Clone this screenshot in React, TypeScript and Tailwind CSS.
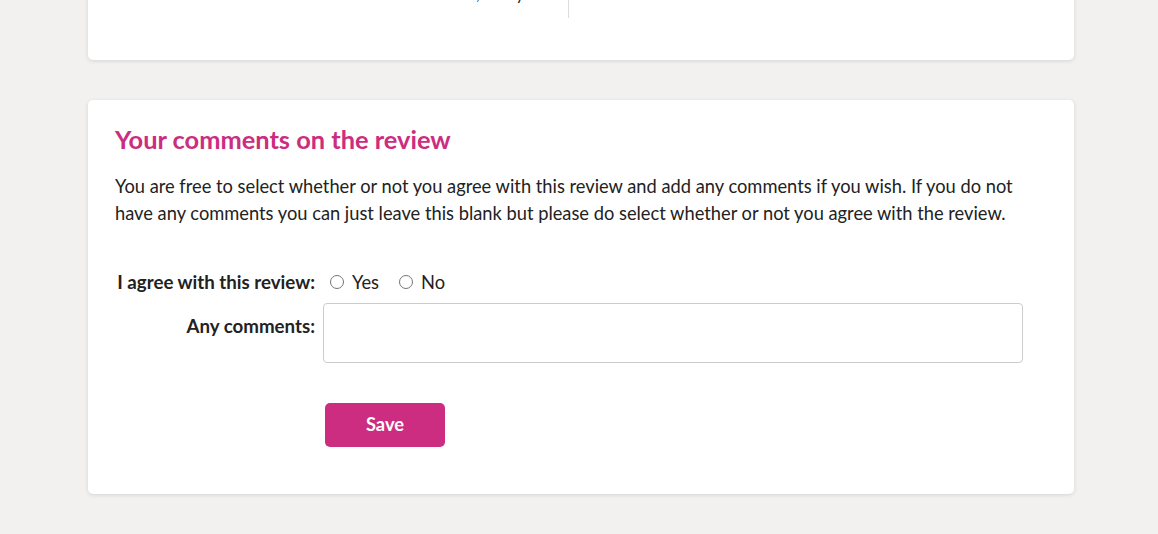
import { useState } from 'react';

export default function App() {
  const [agree, setAgree] = useState<string | null>(null);

  return (
    <div className="flex min-h-[534px] flex-col bg-[#f2f1ef] pl-[88px] pr-[84px] pb-10 font-['Lato','Open_Sans',sans-serif] text-[18.3px] text-[#222222]">
      {/* previous card, scrolled mostly off screen */}
      <div className="-mt-[20px] rounded-b-[5px] bg-white pb-[42px] shadow-[0_1px_4px_rgba(0,0,0,0.12)]">
        <div className="flex">
          <div className="w-[481px] border-r border-[#dddddd] pb-[11px] pr-[44px] text-right text-[16px] leading-[27px] text-[#222222]">
            Submitted 14 March, 1 July
          </div>
          <div className="flex-1" />
        </div>
      </div>

      <div className="mt-10 rounded-[5px] bg-white px-[27px] pb-[47px] pt-[22px] shadow-[0_1px_4px_rgba(0,0,0,0.12)]">
        <h2 className="text-[25.4px] font-bold leading-[34px] text-[#cc2d80]">
          Your comments on the review
        </h2>
        <p className="mt-[17px] max-w-[920px] leading-[27px]">
          You are free to select whether or not you agree with this review and add any comments if you wish. If you do
          not have any comments you can just leave this blank but please do select whether or not you agree with the
          review.
        </p>

        <div className="mt-[44px] grid grid-cols-[200px_1fr] items-center gap-x-[8px]">
          <div className="text-right text-[18.7px] font-bold leading-[22px]">I agree with this review:</div>
          <div className="flex items-center gap-[20px] pl-[7px] leading-[22px]">
            {['Yes', 'No'].map((opt) => (
              <label key={opt} className="flex cursor-pointer items-center gap-[8px]">
                <input
                  type="radio"
                  name="agree"
                  checked={agree === opt}
                  onChange={() => setAgree(opt)}
                  className="h-[14px] w-[14px] accent-[#cc2d80]"
                />
                <span>{opt}</span>
              </label>
            ))}
          </div>

          <div className="mt-[10px] self-start pt-[12px] text-right text-[18.7px] font-bold leading-[22px]">
            Any comments:
          </div>
          <div className="mt-[10px]">
            <textarea className="block h-[60px] w-[700px] resize-none rounded-[4px] border border-[#cccccc] px-3 py-2 outline-none" />
          </div>

          <div />
          <div className="mt-[40px] pl-[2px]">
            <button className="h-[44px] w-[120px] rounded-[5px] bg-[#cc2d80] text-[18.3px] font-bold text-white">
              Save
            </button>
          </div>
        </div>
      </div>
    </div>
  );
}
